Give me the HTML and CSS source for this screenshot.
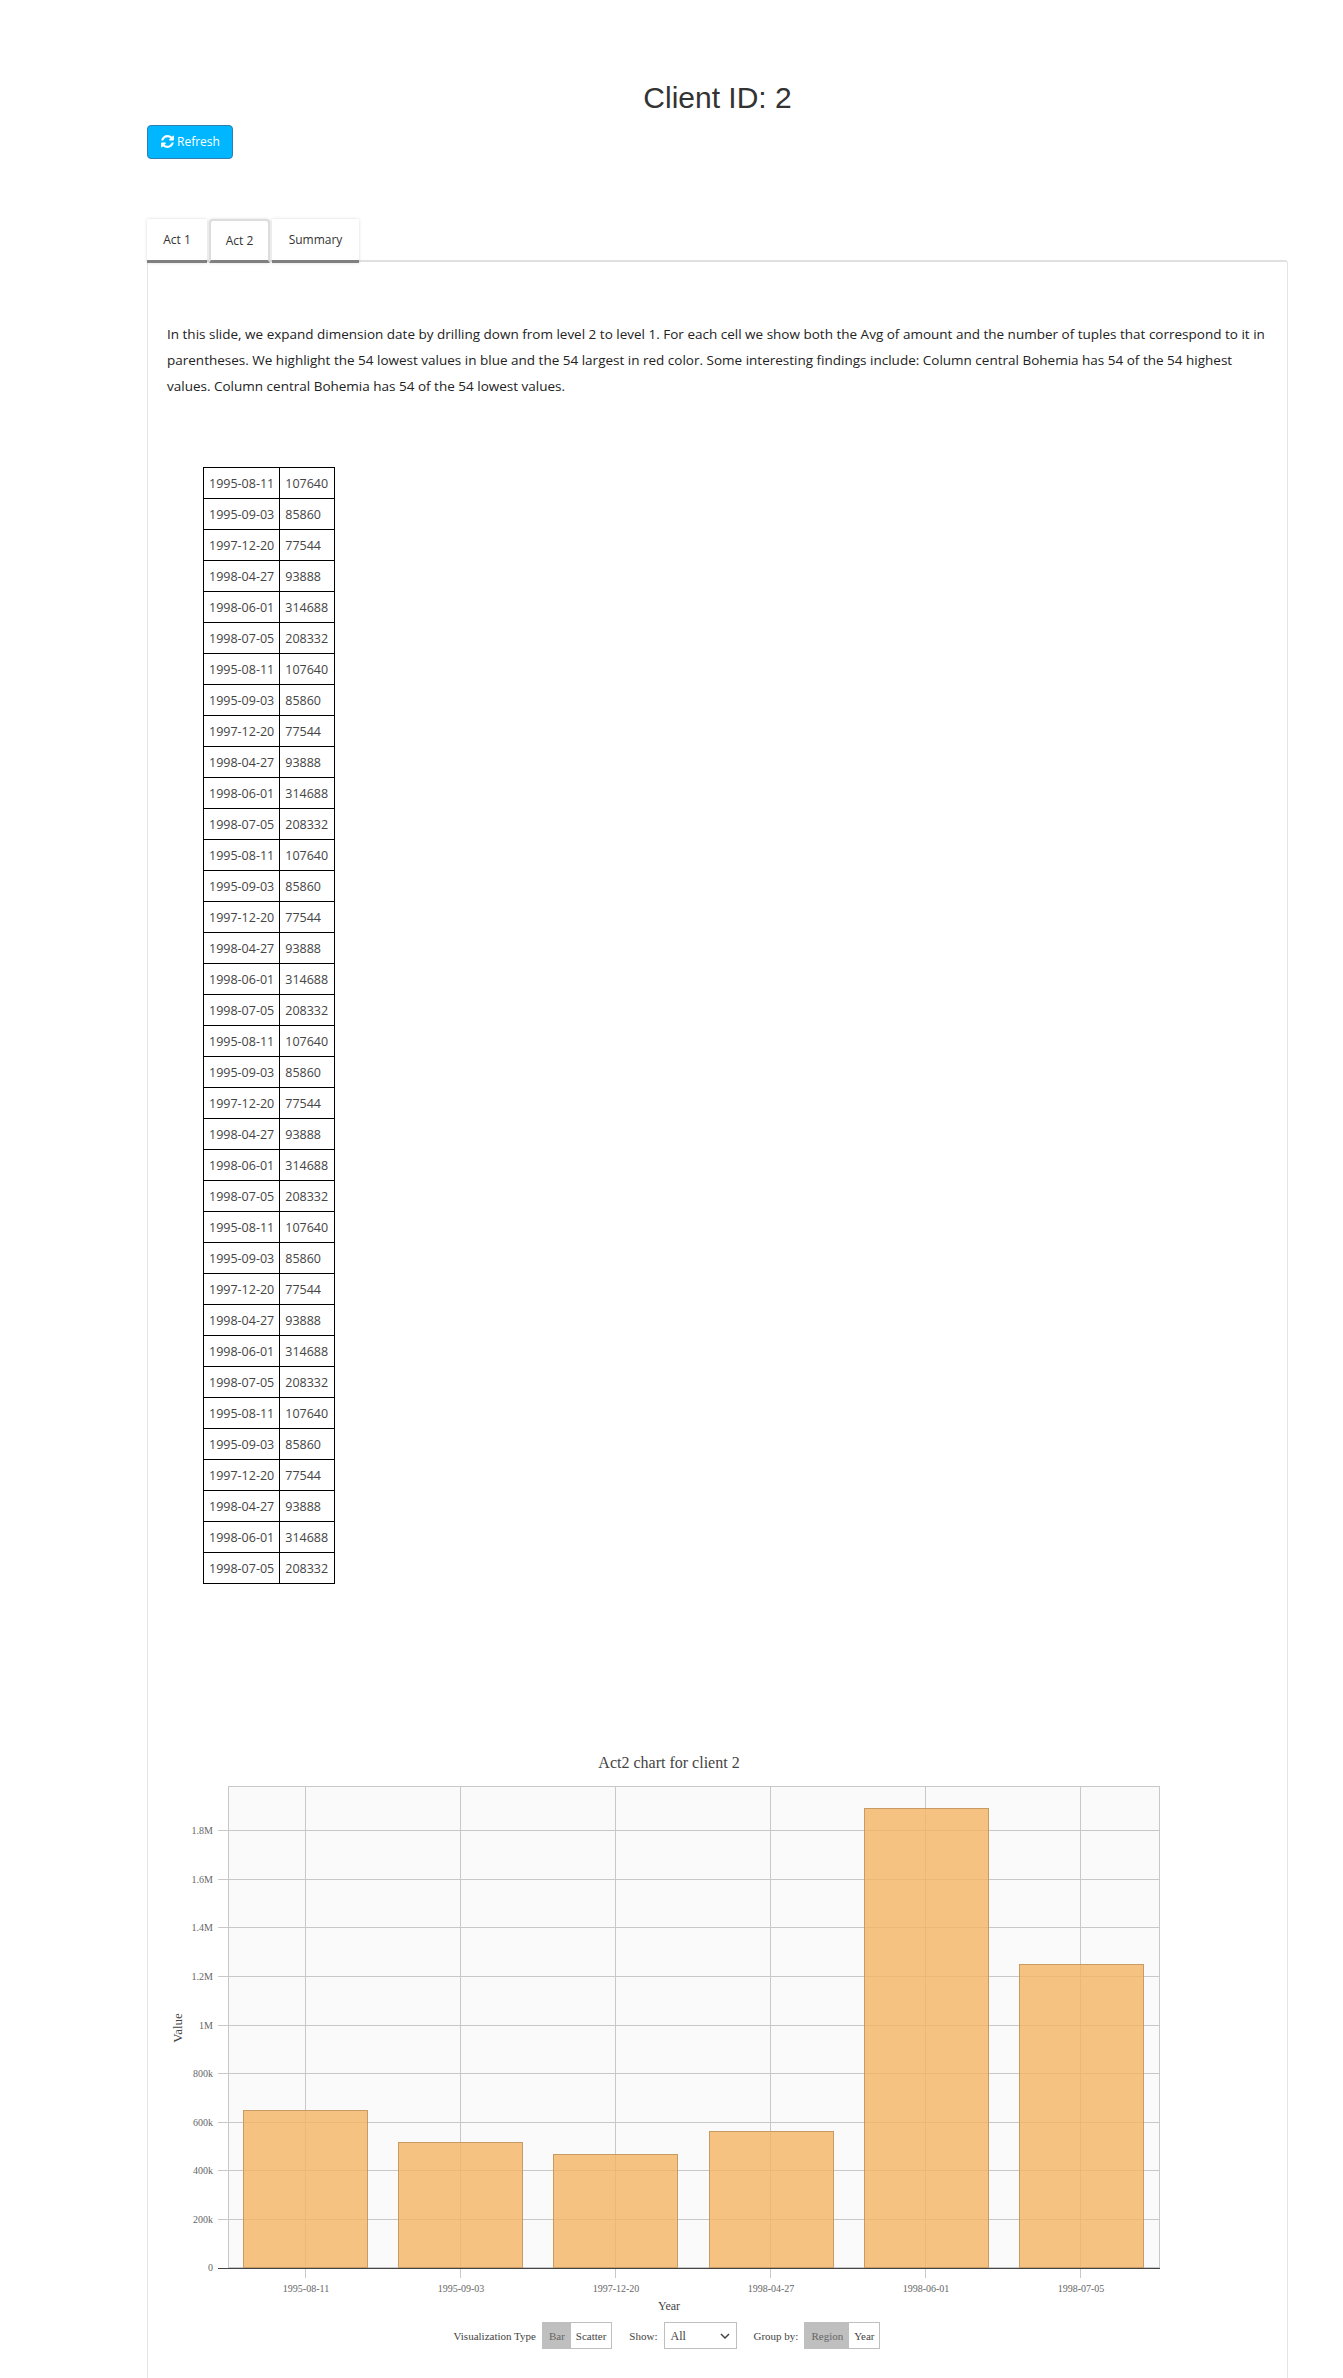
FILE: index.html
```html
<!DOCTYPE html>
<html lang="en">
<head>
  <title>Client ID: 2</title>
  <meta charset="UTF-8">
  <meta name="viewport" content="width=device-width, initial-scale=1">
  <link rel="stylesheet" href="styles.css">
</head>
<body>
  <div class="page">
    <h1 class="client-title">Client ID: 2</h1>
    <button class="refresh-button">
      <svg class="refresh-icon" viewBox="0 0 1792 1792"><path fill="#fff" d="M1639 1056q0 5-1 7-64 268-268 434.5t-478 166.5q-146 0-282.5-55t-243.5-157l-129 129q-19 19-45 19t-45-19-19-45v-448q0-26 19-45t45-19h448q26 0 45 19t19 45-19 45l-137 137q71 66 161 102t187 36q134 0 250-65t186-179q11-17 53-117 8-23 30-23h192q13 0 22.5 9.5t9.5 22.5zm25-800v448q0 26-19 45t-45 19h-448q-26 0-45-19t-19-45 19-45l138-138q-148-137-349-137-134 0-250 65t-186 179q-11 17-53 117-8 23-30 23h-199q-13 0-22.5-9.5t-9.5-22.5v-7q65-268 270-434.5t480-166.5q146 0 284 55.5t245 156.5l130-129q19-19 45-19t45 19 19 45z"/></svg>
      Refresh
    </button>

    <div class="tabs">
      <div class="tab tab-first">Act 1</div>
      <div class="tab tab-active">Act 2</div>
      <div class="tab tab-last">Summary</div>
    </div>

    <div class="tab-panel">
      <p class="intro">In this slide, we expand dimension date by drilling down from level 2 to level 1. For each cell we show both the Avg of amount and the number of tuples that correspond to it in parentheses. We highlight the 54 lowest values in blue and the 54 largest in red color. Some interesting findings include: Column central Bohemia has 54 of the 54 highest values. Column central Bohemia has 54 of the 54 lowest values.</p>

      <table class="data-table">
        <tr><td>1995-08-11</td><td>107640</td></tr>
        <tr><td>1995-09-03</td><td>85860</td></tr>
        <tr><td>1997-12-20</td><td>77544</td></tr>
        <tr><td>1998-04-27</td><td>93888</td></tr>
        <tr><td>1998-06-01</td><td>314688</td></tr>
        <tr><td>1998-07-05</td><td>208332</td></tr>
        <tr><td>1995-08-11</td><td>107640</td></tr>
        <tr><td>1995-09-03</td><td>85860</td></tr>
        <tr><td>1997-12-20</td><td>77544</td></tr>
        <tr><td>1998-04-27</td><td>93888</td></tr>
        <tr><td>1998-06-01</td><td>314688</td></tr>
        <tr><td>1998-07-05</td><td>208332</td></tr>
        <tr><td>1995-08-11</td><td>107640</td></tr>
        <tr><td>1995-09-03</td><td>85860</td></tr>
        <tr><td>1997-12-20</td><td>77544</td></tr>
        <tr><td>1998-04-27</td><td>93888</td></tr>
        <tr><td>1998-06-01</td><td>314688</td></tr>
        <tr><td>1998-07-05</td><td>208332</td></tr>
        <tr><td>1995-08-11</td><td>107640</td></tr>
        <tr><td>1995-09-03</td><td>85860</td></tr>
        <tr><td>1997-12-20</td><td>77544</td></tr>
        <tr><td>1998-04-27</td><td>93888</td></tr>
        <tr><td>1998-06-01</td><td>314688</td></tr>
        <tr><td>1998-07-05</td><td>208332</td></tr>
        <tr><td>1995-08-11</td><td>107640</td></tr>
        <tr><td>1995-09-03</td><td>85860</td></tr>
        <tr><td>1997-12-20</td><td>77544</td></tr>
        <tr><td>1998-04-27</td><td>93888</td></tr>
        <tr><td>1998-06-01</td><td>314688</td></tr>
        <tr><td>1998-07-05</td><td>208332</td></tr>
        <tr><td>1995-08-11</td><td>107640</td></tr>
        <tr><td>1995-09-03</td><td>85860</td></tr>
        <tr><td>1997-12-20</td><td>77544</td></tr>
        <tr><td>1998-04-27</td><td>93888</td></tr>
        <tr><td>1998-06-01</td><td>314688</td></tr>
        <tr><td>1998-07-05</td><td>208332</td></tr>
      </table>

      <!-- viewBox uses page coordinates so the numbers can be read off the screenshot -->
      <svg class="chart" viewBox="160 1750 1014 564" width="1014" height="564">
        <rect class="plot-bg" x="228.5" y="1786.5" width="931" height="481"/>
        <g class="grid">
          <path d="M218 1830.5H1160M218 1879.5H1160M218 1927.5H1160M218 1976.5H1160M218 2025.5H1160M218 2073.5H1160M218 2122.5H1160M218 2170.5H1160M218 2219.5H1160"/>
          <path d="M305.5 1786V2278M460.5 1786V2278M615.5 1786V2278M770.5 1786V2278M925.5 1786V2278M1080.5 1786V2278"/>
        </g>
        <g class="bars">
          <rect x="243.5" y="2110.5" width="124" height="157"/>
          <rect x="398.5" y="2142.5" width="124" height="125"/>
          <rect x="553.5" y="2154.5" width="124" height="113"/>
          <rect x="709.5" y="2131.5" width="124" height="136"/>
          <rect x="864.5" y="1808.5" width="124" height="459"/>
          <rect x="1019.5" y="1964.5" width="124" height="303"/>
        </g>
        <path class="axis" d="M218 2268.5H1160"/>
        <text class="chart-title" x="669" y="1768">Act2 chart for client 2</text>
        <g class="y-ticks">
          <text x="213" y="1834">1.8M</text>
          <text x="213" y="1883">1.6M</text>
          <text x="213" y="1931">1.4M</text>
          <text x="213" y="1980">1.2M</text>
          <text x="213" y="2029">1M</text>
          <text x="213" y="2077">800k</text>
          <text x="213" y="2126">600k</text>
          <text x="213" y="2174">400k</text>
          <text x="213" y="2223">200k</text>
          <text x="213" y="2271">0</text>
        </g>
        <g class="x-ticks">
          <text x="306" y="2292">1995-08-11</text>
          <text x="461" y="2292">1995-09-03</text>
          <text x="616" y="2292">1997-12-20</text>
          <text x="771" y="2292">1998-04-27</text>
          <text x="926" y="2292">1998-06-01</text>
          <text x="1081" y="2292">1998-07-05</text>
        </g>
        <text class="axis-title" x="669" y="2310">Year</text>
        <text class="axis-title value-title" transform="translate(182 2028) rotate(-90)">Value</text>
      </svg>

      <div class="controls">
        <span class="control-label">Visualization Type</span>
        <div class="toggle toggle-viz">
          <span class="toggle-item toggle-on">Bar</span>
          <span class="toggle-item">Scatter</span>
        </div>
        <span class="control-label label-show">Show:</span>
        <select class="show-select">
          <option>All</option>
        </select>
        <span class="control-label label-group">Group by:</span>
        <div class="toggle">
          <span class="toggle-item toggle-on">Region</span>
          <span class="toggle-item">Year</span>
        </div>
      </div>
    </div>
  </div>
</body>
</html>
```

FILE: styles.css
```css
html, body {
  margin: 0;
  padding: 0;
  background-color: #fff;
}

body {
  font-family: "Open Sans", Arial, sans-serif;
  color: #333;
}

.page {
  width: 1141px;
  margin-left: 147px;
  padding-top: 81px;
}

.client-title {
  margin: 0;
  font-family: "Liberation Sans", Arial, sans-serif;
  font-size: 30px;
  font-weight: 400;
  line-height: 34px;
  text-align: center;
  color: #333;
}

.refresh-button {
  display: flex;
  align-items: center;
  gap: 2px;
  width: 86px;
  height: 34px;
  margin-top: 10px;
  padding: 0 12px 2px;
  font-family: "Open Sans", Arial, sans-serif;
  font-size: 12px;
  color: #fff;
  background-color: #00b7ff;
  border: 1px solid #2e7fb0;
  border-radius: 4px;
  white-space: nowrap;
}

.refresh-icon {
  width: 15px;
  height: 15px;
  flex: none;
}

.tabs {
  display: flex;
  gap: 2px;
  height: 44px;
  margin-top: 60px;
  position: relative;
  z-index: 1;
}

.tab {
  display: flex;
  align-items: center;
  justify-content: center;
  box-sizing: border-box;
  font-size: 12px;
  color: #333;
  background-color: #fff;
  border-bottom: 3px solid #808080;
  box-shadow: 0 0 3px rgba(0, 0, 0, 0.15);
}

.tab-first {
  width: 60px;
}

.tab-active {
  width: 61px;
  padding-bottom: 1px;
  border: 2px solid #ddd;
  border-bottom: 3px solid #808080;
  border-radius: 4px 4px 0 0;
}

.tab-last {
  width: 87px;
}

.tab-panel {
  box-sizing: border-box;
  height: 2118px;
  margin-top: -3px;
  padding: 59px 19px 0 12px;
  border: 1px solid #e4e4e4;
  border-top: 2px solid #e0e0e0;
  border-bottom: 0;
  border-radius: 3px 3px 0 0;
}

.intro {
  margin: 0 0 68px 7px;
  font-size: 13.5px;
  line-height: 26px;
  color: #222;
}

.data-table {
  margin-left: 43px;
  border-collapse: collapse;
  font-size: 12.5px;
  color: #444;
}

.data-table td {
  height: 31px;
  box-sizing: border-box;
  padding: 0 5px;
  border: 1px solid #000;
  white-space: nowrap;
}

.data-table tr td:last-child {
  width: 55px;
}

.chart {
  display: block;
  margin-top: 166px;
  font-family: "Liberation Serif", "Times New Roman", serif;
}

.plot-bg {
  fill: #fafafa;
  stroke: #c8c8c8;
}

.grid path {
  fill: none;
  stroke: #c8c8c8;
  stroke-width: 1;
}

.bars rect {
  fill: rgba(245, 180, 100, 0.8);
  stroke: #c89a64;
  stroke-width: 1;
}

.axis {
  fill: none;
  stroke: #444;
  stroke-width: 1;
}

.chart-title {
  font-size: 16px;
  text-anchor: middle;
  fill: #444;
}

.axis-title {
  font-size: 12px;
  text-anchor: middle;
  fill: #444;
}

.value-title {
  font-size: 13px;
}

.y-ticks text {
  font-size: 10px;
  text-anchor: end;
  fill: #666;
}

.x-ticks text {
  font-size: 10px;
  text-anchor: middle;
  fill: #666;
}

.controls {
  display: flex;
  align-items: center;
  justify-content: center;
  width: 1014px;
  height: 27px;
  margin-top: 8px;
  font-family: "Liberation Serif", "Times New Roman", serif;
  font-size: 11px;
  color: #444;
}

.toggle {
  display: flex;
  height: 27px;
  box-sizing: border-box;
  margin-left: 6px;
  border: 1px solid #bfbfbf;
}

.toggle-item {
  display: flex;
  align-items: center;
  padding: 0 5px;
  color: #444;
  background-color: #fff;
}

.toggle-on {
  padding: 0 6px;
  color: #666;
  background-color: #bfbfbf;
}

.label-show {
  margin-left: 17px;
}

.label-group {
  margin-left: 16px;
}

.show-select {
  width: 73px;
  height: 27px;
  box-sizing: border-box;
  margin-left: 7px;
  padding: 0 0 0 5px;
  font-family: "Liberation Serif", "Times New Roman", serif;
  font-size: 12px;
  color: #444;
  appearance: none;
  background-color: #fff;
  background-image: url("data:image/svg+xml,%3Csvg xmlns='http://www.w3.org/2000/svg' width='10' height='6'%3E%3Cpath d='M1 1l4 4 4-4' fill='none' stroke='%23444' stroke-width='1.5'/%3E%3C/svg%3E");
  background-repeat: no-repeat;
  background-position: right 6px center;
  border: 1px solid #bfbfbf;
  border-radius: 0;
}
```
